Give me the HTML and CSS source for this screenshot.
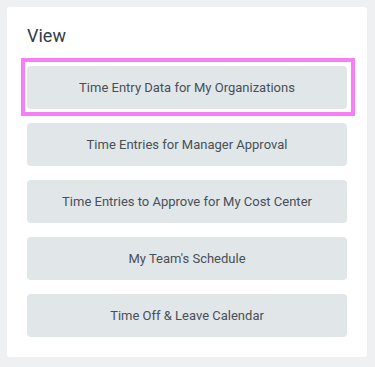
FILE: index.html
```html
<!DOCTYPE html>
<html lang="en">
<head>
<meta charset="utf-8">
<title>View</title>
<link rel="stylesheet" href="styles.css">
</head>
<body>
  <section class="card">
    <h2 class="card-title">View</h2>
    <div class="actions">
      <button class="action is-focused" type="button">Time Entry Data for My Organizations</button>
      <button class="action" type="button">Time Entries for Manager Approval</button>
      <button class="action" type="button">Time Entries to Approve for My Cost Center</button>
      <button class="action" type="button">My Team's Schedule</button>
      <button class="action" type="button">Time Off &amp; Leave Calendar</button>
    </div>
  </section>
</body>
</html>
```

FILE: styles.css
```css
html, body {
  margin: 0;
  padding: 0;
}

body {
  background: #eef0f2;
  font-family: Roboto, "Liberation Sans", Arial, sans-serif;
  padding: 7px;
  width: 375px;
  height: 367px;
  box-sizing: border-box;
}

.card {
  background: #ffffff;
  width: 360px;
  height: 350px;
  box-sizing: border-box;
  border-radius: 3px;
  padding: 17px 20px 20px;
  display: flex;
  flex-direction: column;
}

.card-title {
  margin: 0 0 18px 0;
  font-size: 18px;
  line-height: 24px;
  font-weight: 400;
  color: #333d47;
  padding-left: 0;
}

.actions {
  display: flex;
  flex-direction: column;
  gap: 14px;
}

.action {
  position: relative;
  height: 43px;
  width: 320px;
  border: 0;
  border-radius: 4px;
  background: #e1e6e9;
  color: #494f57;
  font-family: Roboto, "Liberation Sans", Arial, sans-serif;
  font-size: 13px;
  font-weight: 400;
  display: flex;
  align-items: center;
  justify-content: center;
  padding: 0 8px;
  margin: 0;
  cursor: pointer;
}

.action.is-focused::after {
  content: "";
  position: absolute;
  top: -8px;
  bottom: -7px;
  left: -6px;
  right: -8px;
  border: 4px solid #f77ef6;
  pointer-events: none;
}
```
